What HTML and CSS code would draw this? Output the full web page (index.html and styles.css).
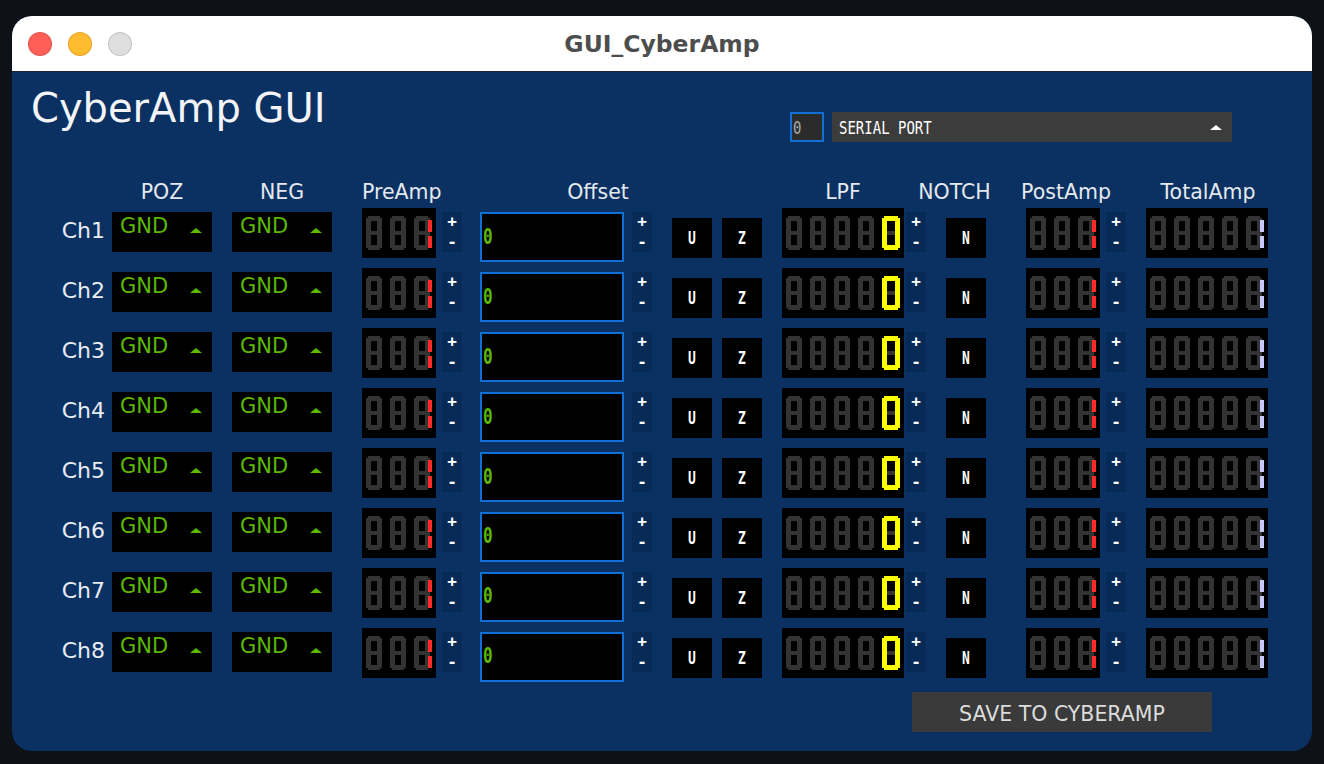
FILE: index.html
```html
<!DOCTYPE html>
<html>
<head>
<meta charset="utf-8">
<title>GUI_CyberAmp</title>
<link rel="stylesheet" href="styles.css">
</head>
<body>
<svg class="defs" width="0" height="0" aria-hidden="true">
  <defs>
    <g id="d8" fill="#333333">
      <rect x="2" y="0" width="12" height="5"/>
      <rect x="0" y="2" width="5" height="15"/>
      <rect x="11" y="2" width="5" height="15"/>
      <rect x="2" y="15" width="12" height="4"/>
      <rect x="0" y="17" width="5" height="15"/>
      <rect x="11" y="17" width="5" height="15"/>
      <rect x="2" y="29" width="12" height="5"/>
    </g>
    <symbol id="pre" viewBox="0 0 74 50">
      <use href="#d8" x="4" y="8"/>
      <use href="#d8" x="28" y="8"/>
      <use href="#d8" x="52" y="8"/>
      <rect x="66" y="12" width="4" height="12" fill="#ff2b2b"/>
      <rect x="66" y="28" width="4" height="12" fill="#ff2b2b"/>
    </symbol>
    <symbol id="lpf" viewBox="0 0 122 50">
      <use href="#d8" x="4" y="8"/>
      <use href="#d8" x="28" y="8"/>
      <use href="#d8" x="52" y="8"/>
      <use href="#d8" x="76" y="8"/>
      <rect x="104" y="23" width="10" height="4" fill="#333333"/>
      <g fill="#ffff00">
        <rect x="102" y="8" width="14" height="5"/>
        <rect x="102" y="37" width="14" height="5"/>
        <rect x="100" y="10" width="5" height="30"/>
        <rect x="113" y="10" width="5" height="30"/>
      </g>
    </symbol>
    <symbol id="tot" viewBox="0 0 122 50">
      <use href="#d8" x="4" y="8"/>
      <use href="#d8" x="28" y="8"/>
      <use href="#d8" x="52" y="8"/>
      <use href="#d8" x="76" y="8"/>
      <use href="#d8" x="100" y="8"/>
      <rect x="114" y="12" width="4" height="12" fill="#c8c8ff"/>
      <rect x="114" y="28" width="4" height="12" fill="#c8c8ff"/>
    </symbol>
  </defs>
</svg>

<div class="window">
  <div class="titlebar">
    <div class="lights">
      <span class="light l-red"></span>
      <span class="light l-yellow"></span>
      <span class="light l-gray"></span>
    </div>
    <div class="wtitle">GUI_CyberAmp</div>
    <div></div>
  </div>

  <div class="content">
    <div class="top">
      <div class="apptitle">CyberAmp GUI</div>
      <div class="serial">
        <div class="sbox"><span class="px px-s">0</span></div>
        <div class="sdrop"><span class="px px-s">SERIAL PORT</span><span class="tri tri-w"></span></div>
      </div>
    </div>

    <div class="heads">
      <span class="h-sp"></span>
      <span class="h-poz">POZ</span>
      <span class="h-neg">NEG</span>
      <span class="h-pre">PreAmp</span>
      <span class="h-off">Offset</span>
      <span class="h-lpf">LPF</span>
      <span class="h-notch">NOTCH</span>
      <span class="h-post">PostAmp</span>
      <span class="h-tot">TotalAmp</span>
    </div>

    <div class="rows">
      <div class="row">
        <div class="ch">Ch1</div>
        <div class="dd"><span>GND</span><span class="tri"></span></div>
        <div class="dd neg"><span>GND</span><span class="tri"></span></div>
        <svg class="seg s3 pre"><use href="#pre"/></svg>
        <div class="pm pm-pre"><span>+</span><span>-</span></div>
        <div class="off"><span class="px px-o">0</span></div>
        <div class="pm pm-off"><span>+</span><span>-</span></div>
        <div class="btn u"><span class="px px-b">U</span></div>
        <div class="btn z"><span class="px px-b">Z</span></div>
        <svg class="seg s5 lpf"><use href="#lpf"/></svg>
        <div class="pm pm-lpf"><span>+</span><span>-</span></div>
        <div class="btn n"><span class="px px-b">N</span></div>
        <svg class="seg s3 post"><use href="#pre"/></svg>
        <div class="pm pm-post"><span>+</span><span>-</span></div>
        <svg class="seg s5 tot"><use href="#tot"/></svg>
      </div>
      <div class="row">
        <div class="ch">Ch2</div>
        <div class="dd"><span>GND</span><span class="tri"></span></div>
        <div class="dd neg"><span>GND</span><span class="tri"></span></div>
        <svg class="seg s3 pre"><use href="#pre"/></svg>
        <div class="pm pm-pre"><span>+</span><span>-</span></div>
        <div class="off"><span class="px px-o">0</span></div>
        <div class="pm pm-off"><span>+</span><span>-</span></div>
        <div class="btn u"><span class="px px-b">U</span></div>
        <div class="btn z"><span class="px px-b">Z</span></div>
        <svg class="seg s5 lpf"><use href="#lpf"/></svg>
        <div class="pm pm-lpf"><span>+</span><span>-</span></div>
        <div class="btn n"><span class="px px-b">N</span></div>
        <svg class="seg s3 post"><use href="#pre"/></svg>
        <div class="pm pm-post"><span>+</span><span>-</span></div>
        <svg class="seg s5 tot"><use href="#tot"/></svg>
      </div>
      <div class="row">
        <div class="ch">Ch3</div>
        <div class="dd"><span>GND</span><span class="tri"></span></div>
        <div class="dd neg"><span>GND</span><span class="tri"></span></div>
        <svg class="seg s3 pre"><use href="#pre"/></svg>
        <div class="pm pm-pre"><span>+</span><span>-</span></div>
        <div class="off"><span class="px px-o">0</span></div>
        <div class="pm pm-off"><span>+</span><span>-</span></div>
        <div class="btn u"><span class="px px-b">U</span></div>
        <div class="btn z"><span class="px px-b">Z</span></div>
        <svg class="seg s5 lpf"><use href="#lpf"/></svg>
        <div class="pm pm-lpf"><span>+</span><span>-</span></div>
        <div class="btn n"><span class="px px-b">N</span></div>
        <svg class="seg s3 post"><use href="#pre"/></svg>
        <div class="pm pm-post"><span>+</span><span>-</span></div>
        <svg class="seg s5 tot"><use href="#tot"/></svg>
      </div>
      <div class="row">
        <div class="ch">Ch4</div>
        <div class="dd"><span>GND</span><span class="tri"></span></div>
        <div class="dd neg"><span>GND</span><span class="tri"></span></div>
        <svg class="seg s3 pre"><use href="#pre"/></svg>
        <div class="pm pm-pre"><span>+</span><span>-</span></div>
        <div class="off"><span class="px px-o">0</span></div>
        <div class="pm pm-off"><span>+</span><span>-</span></div>
        <div class="btn u"><span class="px px-b">U</span></div>
        <div class="btn z"><span class="px px-b">Z</span></div>
        <svg class="seg s5 lpf"><use href="#lpf"/></svg>
        <div class="pm pm-lpf"><span>+</span><span>-</span></div>
        <div class="btn n"><span class="px px-b">N</span></div>
        <svg class="seg s3 post"><use href="#pre"/></svg>
        <div class="pm pm-post"><span>+</span><span>-</span></div>
        <svg class="seg s5 tot"><use href="#tot"/></svg>
      </div>
      <div class="row">
        <div class="ch">Ch5</div>
        <div class="dd"><span>GND</span><span class="tri"></span></div>
        <div class="dd neg"><span>GND</span><span class="tri"></span></div>
        <svg class="seg s3 pre"><use href="#pre"/></svg>
        <div class="pm pm-pre"><span>+</span><span>-</span></div>
        <div class="off"><span class="px px-o">0</span></div>
        <div class="pm pm-off"><span>+</span><span>-</span></div>
        <div class="btn u"><span class="px px-b">U</span></div>
        <div class="btn z"><span class="px px-b">Z</span></div>
        <svg class="seg s5 lpf"><use href="#lpf"/></svg>
        <div class="pm pm-lpf"><span>+</span><span>-</span></div>
        <div class="btn n"><span class="px px-b">N</span></div>
        <svg class="seg s3 post"><use href="#pre"/></svg>
        <div class="pm pm-post"><span>+</span><span>-</span></div>
        <svg class="seg s5 tot"><use href="#tot"/></svg>
      </div>
      <div class="row">
        <div class="ch">Ch6</div>
        <div class="dd"><span>GND</span><span class="tri"></span></div>
        <div class="dd neg"><span>GND</span><span class="tri"></span></div>
        <svg class="seg s3 pre"><use href="#pre"/></svg>
        <div class="pm pm-pre"><span>+</span><span>-</span></div>
        <div class="off"><span class="px px-o">0</span></div>
        <div class="pm pm-off"><span>+</span><span>-</span></div>
        <div class="btn u"><span class="px px-b">U</span></div>
        <div class="btn z"><span class="px px-b">Z</span></div>
        <svg class="seg s5 lpf"><use href="#lpf"/></svg>
        <div class="pm pm-lpf"><span>+</span><span>-</span></div>
        <div class="btn n"><span class="px px-b">N</span></div>
        <svg class="seg s3 post"><use href="#pre"/></svg>
        <div class="pm pm-post"><span>+</span><span>-</span></div>
        <svg class="seg s5 tot"><use href="#tot"/></svg>
      </div>
      <div class="row">
        <div class="ch">Ch7</div>
        <div class="dd"><span>GND</span><span class="tri"></span></div>
        <div class="dd neg"><span>GND</span><span class="tri"></span></div>
        <svg class="seg s3 pre"><use href="#pre"/></svg>
        <div class="pm pm-pre"><span>+</span><span>-</span></div>
        <div class="off"><span class="px px-o">0</span></div>
        <div class="pm pm-off"><span>+</span><span>-</span></div>
        <div class="btn u"><span class="px px-b">U</span></div>
        <div class="btn z"><span class="px px-b">Z</span></div>
        <svg class="seg s5 lpf"><use href="#lpf"/></svg>
        <div class="pm pm-lpf"><span>+</span><span>-</span></div>
        <div class="btn n"><span class="px px-b">N</span></div>
        <svg class="seg s3 post"><use href="#pre"/></svg>
        <div class="pm pm-post"><span>+</span><span>-</span></div>
        <svg class="seg s5 tot"><use href="#tot"/></svg>
      </div>
      <div class="row">
        <div class="ch">Ch8</div>
        <div class="dd"><span>GND</span><span class="tri"></span></div>
        <div class="dd neg"><span>GND</span><span class="tri"></span></div>
        <svg class="seg s3 pre"><use href="#pre"/></svg>
        <div class="pm pm-pre"><span>+</span><span>-</span></div>
        <div class="off"><span class="px px-o">0</span></div>
        <div class="pm pm-off"><span>+</span><span>-</span></div>
        <div class="btn u"><span class="px px-b">U</span></div>
        <div class="btn z"><span class="px px-b">Z</span></div>
        <svg class="seg s5 lpf"><use href="#lpf"/></svg>
        <div class="pm pm-lpf"><span>+</span><span>-</span></div>
        <div class="btn n"><span class="px px-b">N</span></div>
        <svg class="seg s3 post"><use href="#pre"/></svg>
        <div class="pm pm-post"><span>+</span><span>-</span></div>
        <svg class="seg s5 tot"><use href="#tot"/></svg>
      </div>
    </div>

    <div class="save">SAVE TO CYBERAMP</div>
  </div>
</div>
</body>
</html>
```

FILE: styles.css
```css
html, body {
  margin: 0;
  padding: 0;
}

body {
  background: #0e1117;
  width: 1324px;
  height: 764px;
  overflow: hidden;
  font-family: "DejaVu Sans", "Liberation Sans", sans-serif;
}

.defs {
  display: block;
  width: 0;
  height: 0;
  overflow: hidden;
}

.window {
  margin: 16px 0 0 12px;
  width: 1300px;
  height: 735px;
  border-radius: 20px;
  overflow: hidden;
  display: flex;
  flex-direction: column;
  background: #0b3162;
}

/* ---------- title bar ---------- */
.titlebar {
  height: 55px;
  flex: none;
  background: #ffffff;
  border-bottom: 1px solid #1c2633;
  display: grid;
  grid-template-columns: 1fr auto 1fr;
  align-items: center;
}

.lights {
  display: flex;
  gap: 16px;
  padding-left: 16px;
}

.light {
  width: 24px;
  height: 24px;
  border-radius: 50%;
  box-sizing: border-box;
  border: 1px solid rgba(0, 0, 0, 0.12);
}

.l-red { background: #ff5f57; }
.l-yellow { background: #febc2e; }
.l-gray { background: #dedede; }

.wtitle {
  font-weight: bold;
  font-size: 23.5px;
  color: #4d4d4d;
  padding-top: 1px;
}

/* ---------- content ---------- */
.content {
  flex: 1;
}

.top {
  height: 110px;
  display: flex;
  align-items: flex-start;
}

.apptitle {
  font-size: 40px;
  line-height: 40px;
  color: #f2f4f7;
  margin: 16px 0 0 19px;
}

.serial {
  margin: 40px 80px 0 auto;
  display: flex;
  gap: 8px;
}

.sbox {
  width: 34px;
  height: 30px;
  box-sizing: border-box;
  border: 2px solid #0f6fd4;
  background: #2b2b2b;
  color: #a8a8a8;
  display: flex;
  align-items: center;
  padding-left: 1px;
}

.sdrop {
  width: 400px;
  height: 30px;
  box-sizing: border-box;
  background: #3c3c3c;
  color: #ffffff;
  display: flex;
  align-items: center;
  padding: 0 10px 0 7px;
}

.px {
  font-family: "DejaVu Sans Mono", "Liberation Mono", monospace;
  display: inline-block;
}

.px-s {
  font-size: 14px;
  line-height: 14px;
  transform: scaleY(1.3);
}

.px-o {
  font-size: 16px;
  line-height: 16px;
  transform: scaleY(1.3);
  font-weight: bold;
}

.px-b {
  font-size: 13px;
  line-height: 13px;
  font-weight: bold;
  transform: scaleY(1.3);
}

.tri {
  margin-left: auto;
  margin-top: 12px;
  width: 0;
  height: 0;
  border-left: 6px solid transparent;
  border-right: 6px solid transparent;
  border-bottom: 5px solid #5cb800;
}

.tri-w {
  margin-top: 0;
  border-bottom-color: #ffffff;
}

/* ---------- column headers ---------- */
.heads {
  display: flex;
  height: 20px;
  font-size: 20.5px;
  line-height: 20px;
  color: #e4e9ef;
}

.heads span {
  display: block;
  flex: none;
  text-align: center;
  white-space: nowrap;
}

.h-sp { width: 100px; }
.h-poz { width: 100px; }
.h-neg { width: 100px; margin-left: 20px; }
.h-pre { width: 74px; margin-left: 30px; }
.h-off { width: 236px; margin-left: 44px; }
.h-lpf { width: 122px; margin-left: 66px; }
.h-notch { width: 81px; margin-left: 10px; }
.h-post { width: 100px; margin-left: 21px; }
.h-tot { width: 120px; margin-left: 32px; }

/* ---------- channel rows ---------- */
.rows {
  margin-top: 6px;
}

.row {
  display: flex;
  align-items: flex-start;
  height: 60px;
}

.row > * {
  flex: none;
}

.ch {
  width: 93px;
  padding-right: 7px;
  text-align: right;
  font-size: 22px;
  line-height: 22px;
  margin-top: 12px;
  color: #e8edf2;
}

.dd {
  width: 100px;
  height: 40px;
  margin-top: 4px;
  box-sizing: border-box;
  background: #000000;
  display: flex;
  align-items: flex-start;
  padding: 4px 10px 0 8px;
  color: #5cb800;
  font-size: 21px;
  line-height: 21px;
}

.neg { margin-left: 20px; }

.seg {
  display: block;
  height: 50px;
  background: #000000;
}

.s3 { width: 74px; }
.s5 { width: 122px; }

.pre { margin-left: 30px; }
.lpf { margin-left: 20px; }
.post { margin-left: 40px; }
.tot { margin-left: 20px; }

.pm {
  width: 20px;
  height: 40px;
  margin-top: 4px;
  background: #072a56;
  color: #ffffff;
  display: flex;
  flex-direction: column;
  text-align: center;
  font-family: "DejaVu Sans Mono", monospace;
  font-weight: bold;
  font-size: 16px;
  line-height: 20px;
}

.pm-pre { margin-left: 6px; }
.pm-off { margin-left: 8px; }
.pm-lpf { margin-left: 2px; }
.pm-post { margin-left: 6px; }

.off {
  width: 144px;
  height: 50px;
  margin: 4px 0 0 18px;
  box-sizing: border-box;
  border: 2px solid #0f6fd4;
  background: #000000;
  color: #5cb800;
  display: flex;
  align-items: center;
  padding-left: 1px;
}

.btn {
  width: 40px;
  height: 40px;
  margin-top: 10px;
  background: #000000;
  color: #ffffff;
  display: flex;
  align-items: center;
  justify-content: center;
}

.u { margin-left: 20px; }
.z { margin-left: 10px; }
.n { margin-left: 20px; }

/* ---------- save button ---------- */
.save {
  margin: 4px 0 0 900px;
  width: 300px;
  height: 40px;
  box-sizing: border-box;
  padding-top: 3px;
  background: #3a3a3a;
  color: #dcdcdc;
  font-size: 20.5px;
  display: flex;
  align-items: center;
  justify-content: center;
}
```
